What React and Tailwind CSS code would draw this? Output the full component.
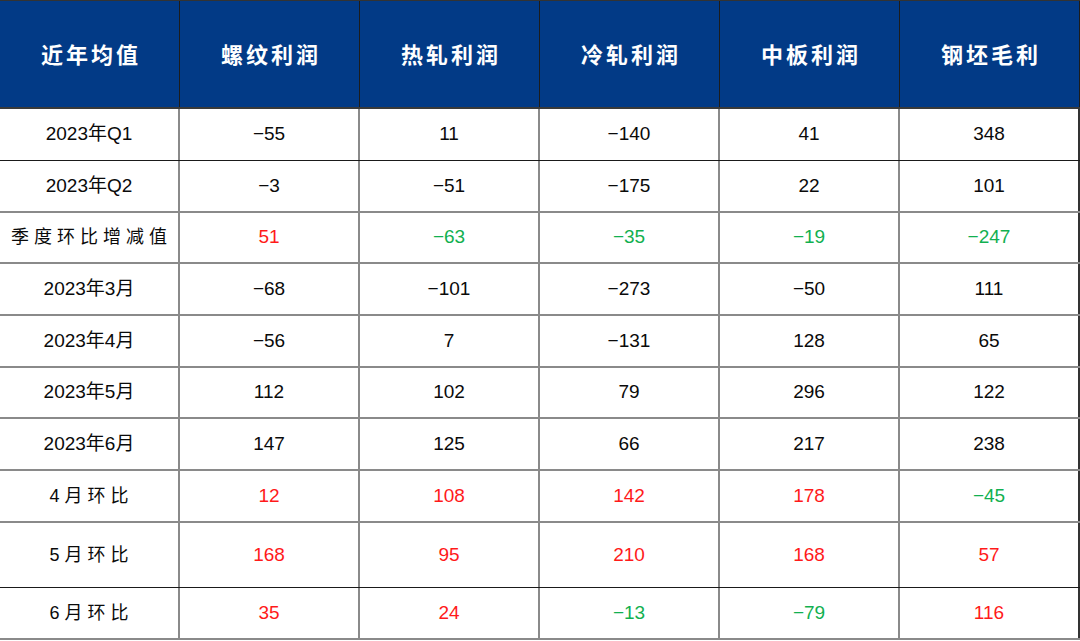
const headers = ['近年均值', '螺纹利润', '热轧利润', '冷轧利润', '中板利润', '钢坯毛利'];

const R = 'r';
const G = 'g';

const rows = [
  { label: '2023年Q1', h: 'h-[52px]', dark: true, cells: ['−55', '11', '−140', '41', '348'] },
  { label: '2023年Q2', h: 'h-[52px]', cells: ['−3', '−51', '−175', '22', '101'] },
  { label: '季度环比增减值', h: 'h-[51px]', cn: true, cells: [['51', R], ['−63', G], ['−35', G], ['−19', G], ['−247', G]] },
  { label: '2023年3月', h: 'h-[52px]', cells: ['−68', '−101', '−273', '−50', '111'] },
  { label: '2023年4月', h: 'h-[52px]', cells: ['−56', '7', '−131', '128', '65'] },
  { label: '2023年5月', h: 'h-[51px]', cells: ['112', '102', '79', '296', '122'] },
  { label: '2023年6月', h: 'h-[52px]', cells: ['147', '125', '66', '217', '238'] },
  { label: '4月环比', h: 'h-[52px]', cn: true, cells: [['12', R], ['108', R], ['142', R], ['178', R], ['−45', G]] },
  { label: '5月环比', h: 'h-[65px]', cn: true, dark: true, cells: [['168', R], ['95', R], ['210', R], ['168', R], ['57', R]] },
  { label: '6月环比', h: 'h-[52px]', cn: true, cells: [['35', R], ['24', R], ['−13', G], ['−79', G], ['116', R]] },
];

const colorOf = c => (c === R ? 'text-[#ff1a1a]' : c === G ? 'text-[#12b050]' : 'text-[#0a0a0a]');

const Cell = ({ children, className }) => (
  <div className={`w-[180px] flex items-center justify-center border-r-2 border-[#8a8a8a] last:border-[#333] ${className}`}>
    {children}
  </div>
);

const App = () => {
  return (
    <div className="w-[1080px] h-[641px] bg-white overflow-hidden border-t border-[#333]">
      <div className="flex h-[108px] bg-[#023a86] border-b-2 border-[#3a3a3a]">
        {headers.map(h => (
          <div
            key={h}
            className="w-[180px] flex items-center justify-center border-r border-[#1c1c1c] text-white font-bold text-[22px] tracking-[3px] pb-[2px] pl-[3px]"
            style={{ fontFamily: '"Noto Sans CJK SC", sans-serif' }}
          >
            {h}
          </div>
        ))}
      </div>
      {rows.map((row, i) => (
        <div
          key={i}
          className={`flex ${row.h} ${row.dark ? 'border-b border-[#1a1a1a]' : 'border-b-2 border-[#8a8a8a]'}`}
        >
          <Cell
            className={
              row.cn
                ? 'text-[18px] tracking-[5px] pl-[5px] text-[#0a0a0a] [font-family:"Liberation_Sans","Noto_Sans_CJK_SC",sans-serif]'
                : 'text-[19px] text-[#0a0a0a] [font-family:"Liberation_Sans","Noto_Sans_CJK_SC",sans-serif]'
            }
          >
            {row.label}
          </Cell>
          {row.cells.map((c, j) => {
            const [v, col] = Array.isArray(c) ? c : [c, null];
            return (
              <Cell key={j} className={`text-[19px] ${colorOf(col)} [font-family:"Liberation_Sans",sans-serif]`}>
                {v}
              </Cell>
            );
          })}
        </div>
      ))}
    </div>
  );
};

export default App;
